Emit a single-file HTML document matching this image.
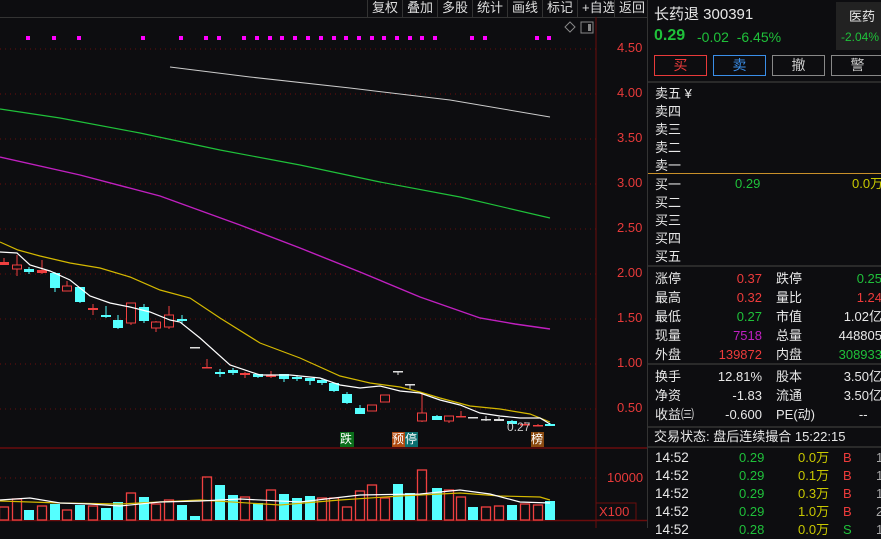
<!DOCTYPE html><html><head><meta charset="utf-8"><style>
body{margin:0;background:#0d0d10;width:881px;height:528px;overflow:hidden;position:relative;font-family:"Liberation Sans","Noto Sans CJK SC",sans-serif;color:#e8e8e8}
.a{position:absolute;white-space:nowrap}
.tb{position:absolute;top:0;height:17px;font-size:13px;line-height:15px;color:#ddd;border-left:1px solid #333;padding:0 4px}
.ax{position:absolute;left:617px;font-size:13px;color:#e83a3a}
.r{font-size:13px;line-height:15px}
.g{color:#1fc13a}.red{color:#ee3b3b}.y{color:#c8c800}.w{color:#e8e8e8}
</style></head><body>
<div class="a" style="left:0;top:17px;width:647px;height:1px;background:#333"></div>
<div class="tb" style="left:367px">复权</div><div class="tb" style="left:402px">叠加</div><div class="tb" style="left:437px">多股</div><div class="tb" style="left:472px">统计</div><div class="tb" style="left:507px">画线</div><div class="tb" style="left:542px">标记</div><div class="tb" style="left:577px">+自选</div><div class="tb" style="left:614px">返回</div>
<svg class="a" style="left:0;top:0" width="647" height="528" id="s">
<line x1="596" y1="17" x2="596" y2="528" stroke="#6a0d0d"/>
<line x1="0" y1="448" x2="647" y2="448" stroke="#6a0d0d" stroke-width="1.5"/>
<line x1="0" y1="520.5" x2="647" y2="520.5" stroke="#6a0d0d" stroke-width="1.5"/>
<rect x="596" y="503" width="40" height="17" fill="none" stroke="#6a0d0d"/>
<path d="M570 22l5 5-5 5-5-5z" fill="none" stroke="#888"/><rect x="581" y="22" width="12" height="11" fill="none" stroke="#888"/><rect x="588" y="24" width="3" height="7" fill="#888"/>
</svg>
<div class="ax" style="top:40px">4.50</div><div class="ax" style="top:85px">4.00</div><div class="ax" style="top:130px">3.50</div><div class="ax" style="top:175px">3.00</div><div class="ax" style="top:220px">2.50</div><div class="ax" style="top:265px">2.00</div><div class="ax" style="top:310px">1.50</div><div class="ax" style="top:355px">1.00</div><div class="ax" style="top:400px">0.50</div>
<div class="ax" style="top:470px;left:607px">10000</div><div class="ax" style="top:504px;left:599px">X100</div>
<div class="a" style="left:340px;top:432px;width:14px;height:15px;background:#0a6e1a;color:#fff;font-size:12px;line-height:15px">跌</div>
<div class="a" style="left:392px;top:432px;width:13px;height:15px;background:#b04a10;color:#fff;font-size:12px;line-height:15px">预</div>
<div class="a" style="left:405px;top:432px;width:13px;height:15px;background:#0a6e6e;color:#fff;font-size:12px;line-height:15px">停</div>
<div class="a" style="left:531px;top:432px;width:13px;height:15px;background:#8a4a10;color:#fff;font-size:12px;line-height:15px">榜</div>
<div class="a" style="left:507px;top:420px;font-size:12px;color:#ccc">0.27</div>
<script>
var s=document.getElementById('s'),h='';
for(var y=49;y<=409;y+=45)h+='<line x1="0" y1="'+y+'" x2="596" y2="'+y+'" stroke="#6a0d0d" stroke-dasharray="1 4"/>';
h+='<line x1="0" y1="478" x2="596" y2="478" stroke="#6a0d0d" stroke-dasharray="1 4"/>';
[28,54,79,143,181,206,219,244,257,270,282,295,308,321,334,346,359,372,384,397,410,422,435,472,485,537,549].forEach(function(x){h+='<rect x="'+(x-2)+'" y="36" width="4" height="4" fill="#f0f"/>'});
var c=[[4,262,265,258,265,'r'],[17,265,269,255,276,'r'],[29,269,272,267,274,'c'],[42,270,273,260,274,'r'],[55,273,288,272,292,'c'],[67,286,291,281,291,'r'],[80,287,302,287,303,'c'],[93,308,310,304,315,'r'],[106,315,317,306,318,'c'],[118,320,328,315,329,'c'],[131,303,323,303,325,'r'],[144,307,321,304,323,'c'],[156,322,328,321,332,'r'],[169,315,327,306,329,'r'],[182,319,321,315,324,'c'],[195,347,348,347,348,'w'],[207,367,368,359,368,'r'],[220,372,374,369,377,'c'],[233,370,373,368,375,'c'],[245,373,375,372,378,'r'],[258,374,377,374,378,'c'],[271,375,377,371,378,'r'],[284,374,379,374,382,'c'],[297,377,379,375,381,'c'],[310,378,381,378,385,'c'],[322,380,383,378,385,'c'],[334,383,391,383,392,'c'],[347,394,403,392,404,'c'],[360,408,414,405,414,'c'],[372,405,411,405,411,'r'],[385,395,402,395,402,'r'],[398,371,372,371,375,'w'],[410,384,385,384,389,'w'],[422,413,421,393,422,'r'],[437,416,420,415,420,'c'],[449,416,421,416,423,'r'],[461,416,417,411,417,'r'],[473,417,418,417,418,'w'],[486,419,420,416,421,'w'],[499,419,421,417,421,'w'],[512,421,424,420,424,'c'],[525,424,425,422,425,'r'],[538,425,426,424,426,'r'],[550,424,426,423,426,'c']];
c.forEach(function(k){var col=k[5]=='r'?'#f04040':k[5]=='c'?'#55ffff':'#ddd';var x=k[0];
h+='<line x1="'+x+'" y1="'+k[3]+'" x2="'+x+'" y2="'+k[4]+'" stroke="'+col+'"/>';
var hh=Math.max(k[2]-k[1],1.5);
if(k[5]=='r'&&hh>3)h+='<rect x="'+(x-4.5)+'" y="'+k[1]+'" width="9" height="'+hh+'" fill="#0d0d10" stroke="'+col+'"/>';
else h+='<rect x="'+(x-5)+'" y="'+k[1]+'" width="10" height="'+hh+'" fill="'+col+'"/>';});
function pl(p,col,w){h+='<polyline points="'+p+'" fill="none" stroke="'+col+'" stroke-width="'+(w||1.2)+'"/>'}
pl('170,67 250,77 350,88 450,100 550,117','#ccc',1);
pl('0,109 60,118 140,133 220,150 300,165 380,182 460,197 550,218','#1fc13a');
pl('0,157 80,175 160,196 240,225 300,248 360,272 420,297 480,318 515,324 550,329','#c020c0',1.4);
pl('0,242 18,250 40,256 70,263 100,268 130,277 160,290 190,298 220,318 260,343 300,358 340,376 370,383 400,387 420,392 440,398 470,406 500,409 530,414 550,422','#d4b800');
pl('0,252 17,253 30,265 50,271 70,280 90,296 110,303 130,307 150,312 170,320 180,322 200,338 230,365 260,375 290,375 320,378 340,385 360,388 380,386 400,391 420,393 440,400 460,405 480,413 500,416 520,418 540,418 550,424','#fff');
var v=[[4,507,'r'],[17,499,'r'],[29,510,'c'],[42,506,'r'],[55,504,'c'],[67,510,'r'],[80,505,'c'],[93,506,'r'],[106,508,'c'],[118,502,'c'],[131,493,'r'],[144,497,'c'],[156,504,'r'],[169,500,'r'],[182,505,'c'],[195,516,'c'],[207,477,'r'],[220,485,'c'],[233,495,'c'],[245,497,'r'],[258,503,'c'],[271,490,'r'],[284,494,'c'],[297,498,'c'],[310,496,'c'],[322,498,'r'],[334,498,'r'],[347,507,'r'],[360,491,'r'],[372,485,'r'],[385,498,'r'],[398,484,'c'],[410,493,'c'],[422,470,'r'],[437,488,'c'],[449,490,'r'],[461,497,'r'],[473,507,'c'],[486,507,'r'],[499,506,'r'],[512,505,'c'],[525,504,'r'],[538,505,'r'],[550,501,'c']];
v.forEach(function(k){var col=k[2]=='r'?'#f04040':'#55ffff';var x=k[0]-5;if(k[2]=='r')h+='<rect x="'+(x+0.5)+'" y="'+k[1]+'" width="9" height="'+(520-k[1])+'" fill="none" stroke="'+col+'" stroke-width="1.3"/>';else h+='<rect x="'+x+'" y="'+k[1]+'" width="10" height="'+(520-k[1])+'" fill="'+col+'"/>'});
pl('0,501 60,503 120,504 200,500 280,505 340,500 400,496 460,493 500,496 540,497 550,500','#d4b800');
pl('0,500 30,498 60,503 90,504 120,506 160,502 200,501 240,499 300,502 360,495 420,494 460,490 490,494 520,502 550,503','#fff');
s.innerHTML+=h;
</script>
<div class="a" style="left:647px;top:0;width:1px;height:528px;background:#333"></div>
<div class="a" style="left:654px;top:3px;font-size:15px">长药退 300391</div>
<div class="a g" style="left:654px;top:27px;font-size:16px;font-weight:bold">0.29</div>
<div class="a g" style="left:697px;top:29px;font-size:14px">-0.02&nbsp;&nbsp;-6.45%</div>
<div class="a" style="left:836px;top:2px;width:45px;height:48px;background:#222"></div>
<div class="a" style="left:849px;top:6px;font-size:13px">医药</div>
<div class="a g" style="left:841px;top:30px;font-size:12px">-2.04%</div>
<div class="a" style="left:654px;top:55px;width:51px;height:19px;border:1px solid #e83a3a;color:#e83a3a;text-align:center;font-size:14px;line-height:19px">买</div>
<div class="a" style="left:713px;top:55px;width:51px;height:19px;border:1px solid #3a8ee8;color:#3a8ee8;text-align:center;font-size:14px;line-height:19px">卖</div>
<div class="a" style="left:772px;top:55px;width:51px;height:19px;border:1px solid #888;color:#ccc;text-align:center;font-size:14px;line-height:19px">撤</div>
<div class="a" style="left:831px;top:55px;width:51px;height:19px;border:1px solid #888;color:#ccc;text-align:center;font-size:14px;line-height:19px">警</div>
<div class="a" style="left:648px;top:81px;width:233px;height:2px;background:#2a2a2a"></div>
<div class="a r" style="left:655px;top:85px;line-height:18px">卖五 ¥<br>卖四<br>卖三<br>卖二<br>卖一</div>
<div class="a" style="left:648px;top:173px;width:233px;height:1px;background:#c8902a"></div>
<div class="a r" style="left:655px;top:176px;line-height:18px">买一<br>买二<br>买三<br>买四<br>买五</div>
<div class="a r g" style="left:735px;top:176px">0.29</div><div class="a r y" style="left:852px;top:176px">0.0万</div>
<div class="a" style="left:648px;top:265px;width:233px;height:2px;background:#2a2a2a"></div>
<div class="a r" style="left:655px;top:269px;line-height:19px">涨停<br>最高<br>最低<br>现量<br>外盘</div>
<div class="a r" style="left:690px;top:269px;line-height:19px;width:72px;text-align:right"><span class="red">0.37</span><br><span class="red">0.32</span><br><span class="g">0.27</span><br><span style="color:#c020c0">7518</span><br><span class="red">139872</span></div>
<div class="a r" style="left:776px;top:269px;line-height:19px">跌停<br>量比<br>市值<br>总量<br>内盘</div>
<div class="a r" style="left:822px;top:269px;line-height:19px;width:60px;text-align:right"><span class="g">0.25</span><br><span class="red">1.24</span><br>1.02亿<br>448805<br><span class="g">308933</span></div>
<div class="a" style="left:648px;top:363px;width:233px;height:2px;background:#2a2a2a"></div>
<div class="a r" style="left:655px;top:367px;line-height:19px">换手<br>净资<br>收益㈢</div>
<div class="a r" style="left:690px;top:367px;line-height:19px;width:72px;text-align:right">12.81%<br>-1.83<br>-0.600</div>
<div class="a r" style="left:776px;top:367px;line-height:19px">股本<br>流通<br>PE(动)</div>
<div class="a r" style="left:822px;top:367px;line-height:19px;width:60px;text-align:right">3.50亿<br>3.50亿<br>--&nbsp;&nbsp;&nbsp;&nbsp;</div>
<div class="a" style="left:648px;top:426px;width:233px;height:2px;background:#2a2a2a"></div>
<div class="a r" style="left:654px;top:429px">交易状态: 盘后连续撮合 15:22:15</div>
<div class="a" style="left:648px;top:446px;width:233px;height:2px;background:#2a2a2a"></div>
<div class="a r" style="left:655px;top:449px;line-height:18px;font-size:13.5px">14:52<br>14:52<br>14:52<br>14:52<br>14:52</div>
<div class="a r g" style="left:739px;top:449px;line-height:18px">0.29<br>0.29<br>0.29<br>0.29<br>0.28</div>
<div class="a r y" style="left:798px;top:449px;line-height:18px">0.0万<br>0.1万<br>0.3万<br>1.0万<br>0.0万</div>
<div class="a r red" style="left:843px;top:449px;line-height:18px">B<br>B<br>B<br>B<br><span class="g">S</span></div>
<div class="a r" style="left:876px;top:449px;line-height:18px;color:#aaa">1<br>1<br>1<br>2<br>1</div>
</body></html>
